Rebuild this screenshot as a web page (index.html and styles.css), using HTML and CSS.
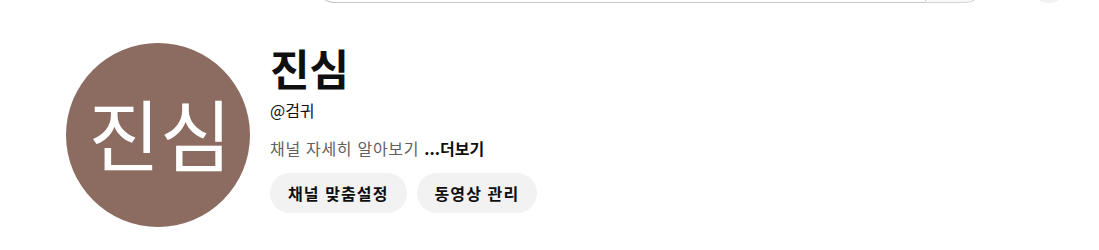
FILE: index.html
```html
<!DOCTYPE html>
<html lang="ko">
<head>
<meta charset="utf-8">
<link rel="stylesheet" href="styles.css">
</head>
<body>
<header class="topbar">
  <div class="search">
    <div class="search-input"></div>
    <div class="search-btn"></div>
  </div>
  <div class="mic"></div>
</header>
<section class="channel">
  <div class="avatar"><span>진심</span></div>
  <div class="info">
    <h1 class="name">진심</h1>
    <div class="handle">@검귀</div>
    <div class="desc">채널 자세히 알아보기 <b>...더보기</b></div>
    <div class="actions">
      <button class="pill">채널 맞춤설정</button>
      <button class="pill">동영상 관리</button>
    </div>
  </div>
</section>
</body>
</html>
```
FILE: styles.css
```css
html, body {
  margin: 0;
  padding: 0;
  background: #ffffff;
  font-family: "Noto Sans CJK KR", "Noto Sans", sans-serif;
  color: #0f0f0f;
  overflow: hidden;
}
.topbar {
  display: flex;
  align-items: flex-end;
  height: 3px;
  padding-left: 315px;
}
.search {
  display: flex;
  height: 40px;
  flex: 0 0 auto;
  margin-top: -37px;
}
.search-input {
  width: 609px;
  border: 1px solid #c6c6c6;
  border-right: none;
  border-radius: 0 0 0 20px;
  box-shadow: inset 0 1px 2px #eeeeee;
}
.search-btn {
  width: 58px;
  border: 1px solid #d3d3d3;
  border-radius: 0 0 20px 0;
  background: #f8f8f8;
}
.mic {
  width: 36px;
  height: 36px;
  border-radius: 50%;
  background: #f2f2f2;
  margin-left: 46px;
  margin-top: -34px;
}
.channel {
  display: flex;
  align-items: center;
  padding: 40px 0 0 66px;
}
.avatar {
  width: 184px;
  height: 184px;
  border-radius: 50%;
  background: #8c6b60;
  display: flex;
  align-items: center;
  justify-content: center;
  flex: 0 0 auto;
}
.avatar span {
  color: #ffffff;
  font-size: 78px;
  font-weight: 400;
  line-height: 1;
  margin-top: -6px;
  margin-left: 4px;
}
.info {
  margin-left: 20px;
  display: flex;
  flex-direction: column;
  align-self: flex-start;
}
.name {
  margin: 0;
  font-size: 43px;
  font-weight: 700;
  line-height: 56px;
  margin-top: -4px;
}
.handle {
  font-size: 16px;
  line-height: 22px;
  margin-top: 4px;
  color: #0f0f0f;
}
.desc {
  font-size: 16px;
  line-height: 22px;
  margin-top: 16px;
  letter-spacing: 0.7px;
  color: #606060;
}
.desc b {
  color: #0f0f0f;
  font-weight: 700;
  letter-spacing: 0;
}
.actions {
  display: flex;
  gap: 10px;
  margin-top: 14px;
}
.pill {
  font-family: inherit;
  font-size: 16px;
  font-weight: 700;
  letter-spacing: 1.1px;
  color: #0f0f0f;
  background: #f2f2f2;
  border: none;
  border-radius: 20px;
  height: 40px;
  padding: 0 18px;
}
```
